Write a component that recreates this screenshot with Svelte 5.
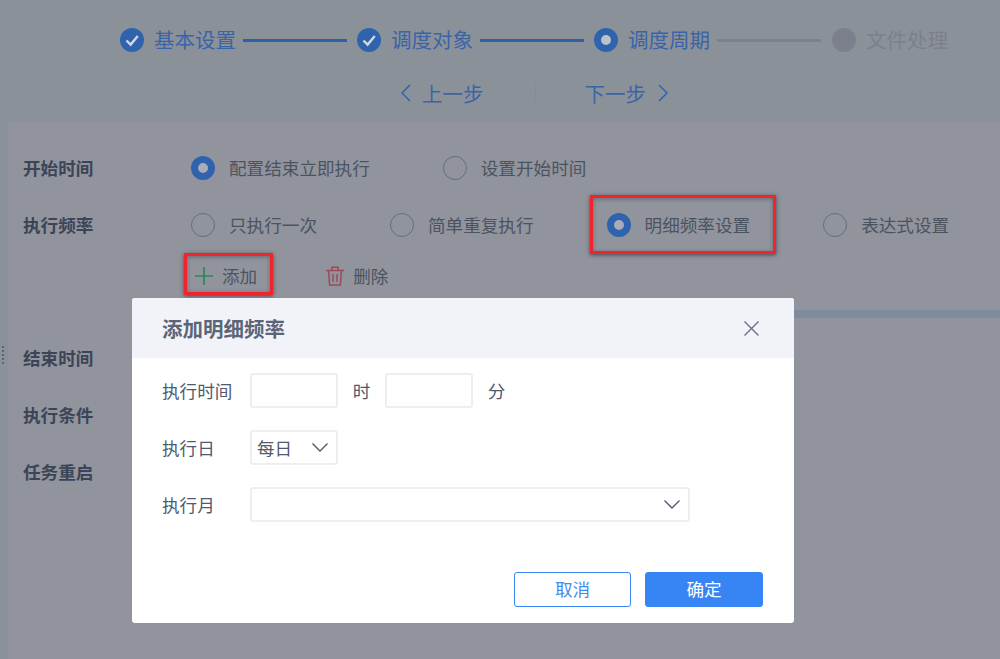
<script>
  const steps = [
    { name: '基本设置', state: 'done' },
    { name: '调度对象', state: 'done' },
    { name: '调度周期', state: 'current' },
    { name: '文件处理', state: 'todo' }
  ];
  const startOptions = [
    { name: '配置结束立即执行', on: true },
    { name: '设置开始时间' }
  ];
  const freqOptions = [
    { name: '只执行一次' },
    { name: '简单重复执行' },
    { name: '明细频率设置', on: true, marked: true },
    { name: '表达式设置' }
  ];
</script>

{#snippet radios(options)}
  <div class="options">
    {#each options as o}
      <div class="option">
        <span class="radio" class:on={o.on}></span>
        <span>{o.name}</span>
        {#if o.marked}<i class="mark"></i>{/if}
      </div>
    {/each}
  </div>
{/snippet}

{#snippet chevron()}
  <svg class="chevron" viewBox="0 0 16 9" width="16" height="9">
    <path d="M.5.5 8 8 15.5.5" fill="none" stroke="#4d5a70" stroke-width="1.4" />
  </svg>
{/snippet}

<div class="page">
  <header class="head">
    <div class="steps">
      {#each steps as s, i}
        {#if i > 0}
          <span class="line" class:gray={s.state === 'todo'}></span>
        {/if}
        <div class="step {s.state}">
          <span class="dot">
            {#if s.state === 'done'}
              <svg viewBox="0 0 24 24" width="24" height="24">
                <path d="M6.5 12.5 10.6 16.6 17.8 8" fill="none" stroke="#d3d7df" stroke-width="2.4" />
              </svg>
            {/if}
          </span>
          <span class="name">{s.name}</span>
        </div>
      {/each}
    </div>
    <div class="nav">
      <div class="prev">
        <svg viewBox="0 0 11 18" width="11" height="18">
          <path d="M10 1 2 9l8 8" fill="none" stroke="#2f63ad" stroke-width="1.5" />
        </svg>
        <span>上一步</span>
      </div>
      <i class="sep"></i>
      <div class="next">
        <span>下一步</span>
        <svg viewBox="0 0 11 18" width="11" height="18">
          <path d="M1 1l8 8-8 8" fill="none" stroke="#2f63ad" stroke-width="1.5" />
        </svg>
      </div>
    </div>
  </header>

  <main class="panel">
    <div class="row">
      <div class="label">开始时间</div>
      {@render radios(startOptions)}
    </div>
    <div class="row">
      <div class="label">执行频率</div>
      {@render radios(freqOptions)}
    </div>
    <div class="tools">
      <div class="tool add">
        <svg viewBox="0 0 18 18" width="18" height="18">
          <path d="M9 0v18M0 9h18" stroke="#2b8558" stroke-width="1.6" />
        </svg>
        <span>添加</span>
        <i class="mark"></i>
      </div>
      <div class="tool del">
        <svg viewBox="0 0 18 20" width="18" height="20">
          <path d="M0 4.5h18M6 4V1.2h6V4M2.6 5l1 14h10.8l1-14M7 8v8M11 8v8" fill="none" stroke="#9c4a5a" stroke-width="1.5" />
        </svg>
        <span>删除</span>
      </div>
    </div>
    <div class="band"></div>
    <div class="row">
      <div class="label">结束时间</div>
    </div>
    <div class="row">
      <div class="label">执行条件</div>
    </div>
    <div class="row">
      <div class="label">任务重启</div>
    </div>
  </main>

  <i class="grip"></i>

  <section class="modal">
    <div class="modal-head">
      <h2>添加明细频率</h2>
      <svg viewBox="0 0 15 15" width="15" height="15">
        <path d="M.5.5l14 14M14.5.5l-14 14" fill="none" stroke="#667085" stroke-width="1.4" />
      </svg>
    </div>
    <div class="modal-body">
      <div class="field">
        <label for="hour">执行时间</label>
        <input id="hour" class="box" />
        <span class="unit">时</span>
        <input class="box" aria-label="分" />
        <span class="unit">分</span>
      </div>
      <div class="field">
        <label for="day">执行日</label>
        <div id="day" class="box select">
          <span>每日</span>
          {@render chevron()}
        </div>
      </div>
      <div class="field">
        <label for="month">执行月</label>
        <div id="month" class="box select wide">
          <span></span>
          {@render chevron()}
        </div>
      </div>
    </div>
    <div class="modal-foot">
      <button class="cancel">取消</button>
      <button class="ok">确定</button>
    </div>
  </section>
</div>

<style>
  :global(body) {
    margin: 0;
    background: #8b9199;
  }
  .page {
    position: relative;
    height: 659px;
    overflow: hidden;
    background: #8b9199;
    font-family: "Noto Sans CJK SC", "Liberation Sans", sans-serif;
    font-size: 17.6px;
    line-height: 24px;
  }
  .head {
    height: 122px;
    padding-left: 120px;
    box-sizing: border-box;
  }
  .steps {
    display: flex;
    align-items: center;
    padding-top: 28px;
    color: #3a64a8;
    font-size: 20.5px;
  }
  .step {
    display: flex;
    align-items: center;
    gap: 10px;
  }
  .name {
    margin-top: -2px;
  }
  .step.todo {
    color: #7b808c;
  }
  .dot {
    width: 24px;
    height: 24px;
    border-radius: 50%;
    background: #2f63ad;
    box-sizing: border-box;
  }
  .dot svg {
    display: block;
  }
  .current .dot {
    background: #bcc1cb;
    border: 7px solid #2f63ad;
  }
  .todo .dot {
    background: #7b808c;
  }
  .line {
    width: 104px;
    height: 3px;
    margin: 0 10px 0 7px;
    background: #2f5fa8;
  }
  .line.gray {
    margin-right: 11px;
    background: #7b808c;
  }
  .nav {
    display: flex;
    align-items: center;
    margin-top: 29px;
    padding-left: 280px;
    color: #3a64a8;
    font-size: 20.5px;
  }
  .prev,
  .next {
    display: flex;
    align-items: center;
    gap: 11px;
  }
  .next {
    gap: 12px;
  }
  .sep {
    width: 1px;
    height: 18px;
    margin: 0 49px 0 51px;
    background: #868c95;
  }
  .panel {
    height: 537px;
    margin-left: 8px;
    padding: 17px 0 0 15px;
    box-sizing: border-box;
    background: #91949d;
  }
  .row {
    display: flex;
    align-items: center;
    height: 57px;
  }
  .label {
    width: 168px;
    flex: none;
    color: #3c4557;
    font-weight: 700;
  }
  .options {
    display: flex;
    gap: 73px;
    color: #4c5360;
  }
  .option {
    position: relative;
    display: flex;
    align-items: center;
    gap: 14px;
  }
  .radio {
    width: 24px;
    height: 24px;
    border: 1.5px solid #666d80;
    border-radius: 50%;
    box-sizing: border-box;
  }
  .radio.on {
    border: 7.5px solid #2f63ad;
    background: #a8acb6;
  }
  .mark {
    position: absolute;
    border: 3px solid #f2232b;
    box-shadow: 0 1px 4px rgba(20, 20, 30, 0.6), inset 0 1px 4px rgba(20, 20, 30, 0.35);
  }
  .option .mark {
    inset: -18px -26px -17px -17px;
  }
  .tools {
    display: flex;
    gap: 69px;
    height: 42px;
    margin: 2px 0 0 172px;
    align-items: center;
    color: #4c5360;
  }
  .tool {
    position: relative;
    display: flex;
    align-items: center;
    gap: 9px;
  }
  .add .mark {
    inset: -11px -16px -7px -11px;
  }
  .band {
    height: 8px;
    margin: 13px 0 11px 400px;
    background: #7f8ca0;
  }
  .grip {
    position: absolute;
    left: 2px;
    top: 346px;
    width: 1px;
    height: 18px;
    border-left: 2px dotted #5d6470;
  }
  .modal {
    position: absolute;
    left: 132px;
    top: 298px;
    width: 662px;
    height: 325px;
    border-radius: 3px;
    overflow: hidden;
    background: #fff;
    color: #4f5a6e;
  }
  .modal-head {
    display: flex;
    align-items: center;
    justify-content: space-between;
    height: 60px;
    padding: 0 35px 0 30px;
    background: #f1f3f8;
  }
  h2 {
    margin: 0;
    font-size: 20.5px;
    font-weight: 700;
    color: #5b6577;
  }
  .modal-body {
    display: flex;
    flex-direction: column;
    gap: 22px;
    padding: 15px 0 0 30px;
  }
  .field {
    display: flex;
    align-items: center;
    height: 35px;
  }
  .field label {
    width: 88px;
    flex: none;
  }
  .box {
    width: 88px;
    height: 35px;
    padding: 0;
    border: 2px solid #eceef3;
    border-radius: 3px;
    box-sizing: border-box;
    background: #fff;
    outline: none;
  }
  .unit {
    width: 47px;
    text-align: center;
  }
  .select {
    display: flex;
    align-items: center;
    justify-content: space-between;
    padding: 0 8px 0 5px;
    color: #4f5a6e;
  }
  .wide {
    width: 440px;
  }
  .modal-foot {
    display: flex;
    justify-content: flex-end;
    gap: 14px;
    margin-top: 50px;
    padding-right: 31px;
  }
  button {
    width: 117px;
    height: 35px;
    border-radius: 3px;
    border: 1.5px solid #3785f5;
    font: inherit;
    padding: 0 0 2px;
  }
  .cancel {
    background: #fff;
    color: #3f8bf5;
  }
  .ok {
    width: 118px;
    background: #3785f5;
    color: #fff;
  }
</style>
